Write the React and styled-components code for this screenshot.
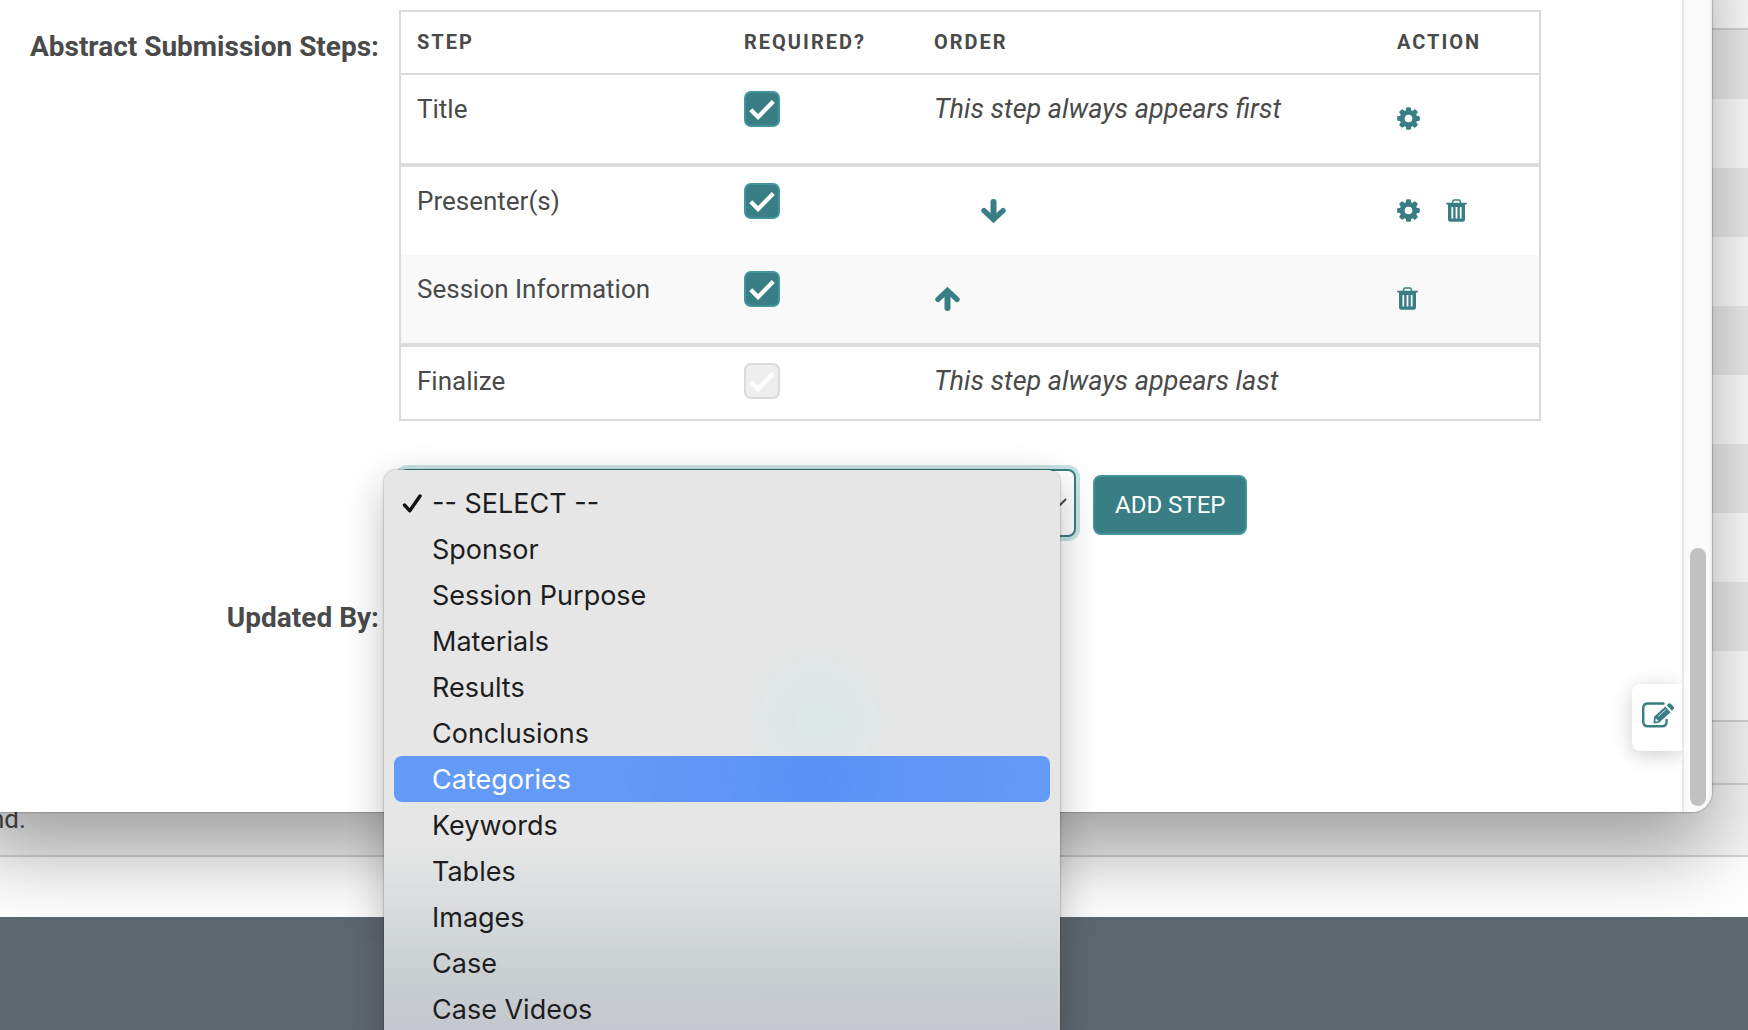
import React from 'react';
import styled, { createGlobalStyle, css } from 'styled-components';

const GlobalStyle = createGlobalStyle`
  * {
    box-sizing: border-box;
  }

  body {
    margin: 0;
    font-family: Roboto, 'Liberation Sans', sans-serif;
    color: #4a4a4a;
  }
`;

const steps = [
  { name: 'Title', required: true, note: 'This step always appears first', settings: true, groupEnd: true },
  { name: 'Presenter(s)', required: true, move: 'down', settings: true, removable: true },
  { name: 'Session Information', required: true, move: 'up', removable: true, striped: true, groupEnd: true },
  { name: 'Finalize', locked: true, note: 'This step always appears last' },
];

const options = [
  '-- SELECT --',
  'Sponsor',
  'Session Purpose',
  'Materials',
  'Results',
  'Conclusions',
  'Categories',
  'Keywords',
  'Tables',
  'Images',
  'Case',
  'Case Videos',
];

const GearIcon = () => (
  <svg width="23" height="23" viewBox="0 0 24 24" fill="none" aria-hidden="true">
    <circle cx="12" cy="12" r="6.6" stroke="currentColor" strokeWidth="5.2" />
    {[0, 45, 90, 135, 180, 225, 270, 315].map((angle) => (
      <rect
        key={angle}
        x="9.4"
        y="0.2"
        width="5.2"
        height="5"
        rx="1.4"
        fill="currentColor"
        transform={`rotate(${angle} 12 12)`}
      />
    ))}
  </svg>
);

const TrashIcon = () => (
  <svg width="21" height="23" viewBox="0 0 21 23" fill="none" aria-hidden="true">
    <path d="M6.2 4.5 7 1.8Q7.300.9 8.200.9h4.600q.9 0 1.200.9l.8 2.700" stroke="currentColor" strokeWidth="1.500" />
    <path d="M.8 4.600h19.400" stroke="currentColor" strokeWidth="1.600" strokeLinecap="round" />
    <path
      fillRule="evenodd"
      fill="currentColor"
      d="M2 5h17v15.500q0 2.300-2.300 2.300H4.300Q2 22.800 2 20.500zM5.400 8v11.500h1.800V8zM9.600 8v11.500h1.800V8zM13.800 8v11.500h1.800V8z"
    />
  </svg>
);

const ArrowIcon = ({ up }) => (
  <svg width="26" height="24" viewBox="-1 0 26 24" fill="none" aria-hidden="true">
    <g transform={up ? undefined : 'rotate(180 12.5 12)'}>
      <path d="M12.500 21V5" stroke="currentColor" strokeWidth="6" strokeLinecap="round" />
      <path d="M3 12.400 12.500 3.500 22 12.400" stroke="currentColor" strokeWidth="5.400" strokeLinecap="round" />
    </g>
  </svg>
);

const ComposeIcon = () => (
  <svg width="33" height="26" viewBox="0 0 33 26" fill="none" aria-hidden="true">
    <path
      d="M22.500 1.500H6Q1.200 1.500 1.200 6.200V19.500Q1.200 24.300 6 24.300H20Q24.600 24.300 24.600 19.500V17"
      stroke="currentColor"
      strokeWidth="2.400"
    />
    <path d="M12 14.800 23.300 4.600 28.600 10.200 17 20.800 11.500 21.400z" fill="currentColor" />
    <path d="M24.700 3.300 26.600 1.600Q27.700.700 28.800 1.700L31.600 4.700Q32.600 5.900 31.600 7L29.900 8.700z" fill="currentColor" />
    <path d="M16.200 14.300 23.800 7.500" stroke="#fff" strokeWidth="0.800" />
    <path d="M13.700 16.300 16.700 19.200 13.400 19.600z" fill="#fff" />
  </svg>
);

const CheckIcon = styled.svg`
  position: absolute;
  inset: 0;
  pointer-events: none;
`;

function StepCheckbox({ name, checked, disabled }) {
  return (
    <CheckLabel>
      <CheckInput type="checkbox" aria-label={`${name} required`} defaultChecked={checked || disabled} disabled={disabled} />
      <CheckIcon width="36" height="36" viewBox="0 0 36 36" fill="none" aria-hidden="true">
        <path d="M6.800 18.800 14 26 29.300 10.500" stroke="#fff" strokeWidth="4.200" />
      </CheckIcon>
    </CheckLabel>
  );
}

function StepRow({ step }) {
  return (
    <Row $striped={step.striped} $groupEnd={step.groupEnd}>
      <td>{step.name}</td>
      <td>
        <StepCheckbox name={step.name} checked={step.required} disabled={step.locked} />
      </td>
      <td>
        {step.note && <Note>{step.note}</Note>}
        {step.move && (
          <OrderControls $end={step.move === 'down'}>
            <IconButton type="button" aria-label={`Move ${step.name} ${step.move}`}>
              <ArrowIcon up={step.move === 'up'} />
            </IconButton>
          </OrderControls>
        )}
      </td>
      <td>
        <Actions>
          {step.settings && (
            <IconButton type="button" aria-label={`${step.name} settings`}>
              <GearIcon />
            </IconButton>
          )}
          {step.removable && (
            <IconButton type="button" aria-label={`Remove ${step.name}`}>
              <TrashIcon />
            </IconButton>
          )}
        </Actions>
      </td>
    </Row>
  );
}

function StepPicker() {
  return (
    <Picker>
      <PickerField>
        <PickerSelect aria-label="Step to add">
          {options.map((option) => (
            <option key={option}>{option}</option>
          ))}
        </PickerSelect>
        <Chevron width="24" height="14" viewBox="0 0 24 14" fill="none" aria-hidden="true">
          <path d="M1 1 12 12 23 1" stroke="#4a4a4a" strokeWidth="2" />
        </Chevron>
        <Menu role="listbox" aria-label="Steps">
          {options.map((option, index) => (
            <MenuItem key={option} role="option" aria-selected={index === 0} $active={option === 'Categories'}>
              <Tick>
                {index === 0 && (
                  <svg width="20" height="20" viewBox="0 0 20 20" fill="none" aria-hidden="true">
                    <path d="M2.500 12 7.800 17.800 18 3" stroke="#111" strokeWidth="3.400" strokeLinecap="round" strokeLinejoin="round" />
                  </svg>
                )}
              </Tick>
              {option}
            </MenuItem>
          ))}
        </Menu>
      </PickerField>
      <AddButton type="button">ADD STEP</AddButton>
    </Picker>
  );
}

export default function App() {
  return (
    <Page>
      <GlobalStyle />
      <ListHead />
      {[...Array(10)].map((_, i) => (
        <ListRow key={i} $dark={i % 2 === 0} />
      ))}
      <ListFoot />
      <ListNote>nd.</ListNote>
      <Blank />
      <Footer />

      <Modal>
        <ModalBody>
          <FieldName>Abstract Submission Steps:</FieldName>
          <div>
            <StepTable>
              <colgroup>
                <col className="step" />
                <col className="required" />
                <col />
                <col className="action" />
              </colgroup>
              <thead>
                <tr>
                  <th>STEP</th>
                  <th>REQUIRED?</th>
                  <th>ORDER</th>
                  <th>ACTION</th>
                </tr>
              </thead>
              <tbody>
                {steps.map((step) => (
                  <StepRow key={step.name} step={step} />
                ))}
              </tbody>
            </StepTable>
            <StepPicker />
          </div>
          <FieldName>Updated By:</FieldName>
        </ModalBody>
        <EditTab type="button" aria-label="Edit">
          <ComposeIcon />
        </EditTab>
        <ScrollTrack>
          <ScrollThumb />
        </ScrollTrack>
      </Modal>
    </Page>
  );
}

const Page = styled.div`
  position: relative;
  display: flex;
  flex-direction: column;
  height: 100vh;
  min-height: 1030px;
  overflow: hidden;
  background: #fff;
`;

const ListHead = styled.div`
  flex: none;
  height: 30px;
  border-bottom: 2px solid #d4d4d4;
`;

const ListRow = styled.div`
  flex: none;
  height: 69px;
  background: ${({ $dark }) => ($dark ? '#ededed' : '#fff')};
`;

const ListFoot = styled.div`
  flex: none;
  height: 65px;
  border: solid #d4d4d4;
  border-width: 2px 0;
  background: #f6f6f6;
`;

const ListNote = styled.div`
  flex: none;
  height: 72px;
  border-bottom: 2px solid #d4d4d4;
  background: #f6f6f6;
  font-size: 26px;
  line-height: 68px;
  text-indent: -10px;
`;

const Blank = styled.div`
  flex: none;
  height: 60px;
`;

const Footer = styled.footer`
  flex: 1;
  background: #5e6871;
`;

const Modal = styled.section`
  position: absolute;
  top: -100px;
  left: -30px;
  right: 36px;
  display: flex;
  border-radius: 20px;
  background: #fff;
  box-shadow: 0 40px 80px rgba(0, 0, 0, 0.35), 0 0 2px rgba(0, 0, 0, 0.6);
`;

const ModalBody = styled.div`
  flex: 1;
  display: grid;
  grid-template-columns: 409px 1fr;
  column-gap: 20px;
  row-gap: 62px;
  padding: 110px 141px 175px 0;
`;

const FieldName = styled.div`
  font-size: 28px;
  font-weight: 700;
  line-height: 38px;
  text-align: right;

  &:first-child {
    padding-top: 18px;
  }
`;

const StepTable = styled.table`
  width: 100%;
  table-layout: fixed;
  border: 2px solid #dadada;
  border-spacing: 0;
  font-size: 26px;

  .step {
    width: 327px;
  }

  .required {
    width: 190px;
  }

  .action {
    width: 158px;
  }

  th {
    height: 63px;
    padding: 0 16px 2px;
    border-bottom: 2px solid #dadada;
    font-size: 20px;
    font-weight: 700;
    letter-spacing: 2px;
    text-align: left;
  }

  td {
    padding: 16px;
    line-height: 36px;
    vertical-align: top;
    white-space: nowrap;
  }
`;

const Row = styled.tr`
  background: ${({ $striped }) => ($striped ? '#f9f9f9' : '#fff')};

  ${({ $groupEnd }) =>
    $groupEnd &&
    css`
      td {
        border-bottom: 4px solid #dcdcdc;
      }
    `}
`;

const CheckLabel = styled.label`
  position: relative;
  display: block;
  width: 36px;
  height: 40px;
`;

const CheckInput = styled.input`
  appearance: none;
  display: block;
  width: 36px;
  height: 36px;
  margin: 0;
  border: 2px solid #43949b;
  border-radius: 7px;
  background: #387e84;

  &:disabled {
    border-color: #dadada;
    background: #eee;
  }
`;

const Note = styled.em`
  display: block;
  font-size: 27px;
  font-style: italic;
`;

const OrderControls = styled.div`
  display: flex;
  padding-left: ${({ $end }) => ($end ? '46px' : '0')};
`;

const Actions = styled.div`
  display: flex;
  gap: 26px;
`;

const IconButton = styled.button`
  display: flex;
  align-items: flex-start;
  height: 56px;
  padding: 16px 0;
  border: 0;
  background: none;
  color: #387e84;
`;

const Picker = styled.div`
  display: flex;
  align-items: flex-start;
  gap: 17px;
  margin-top: 48px;
`;

const PickerField = styled.div`
  position: relative;
  width: 677px;
`;

const PickerSelect = styled.select`
  appearance: none;
  display: block;
  width: 100%;
  height: 68px;
  padding: 0 16px;
  border: 2px solid #387e84;
  border-radius: 8px;
  background: #fff;
  box-shadow: 0 0 0 4px #c8e3e5;
  color: #4a4a4a;
  font: 26px Roboto, sans-serif;
`;

const Chevron = styled.svg`
  position: absolute;
  top: 29px;
  right: 9px;
  pointer-events: none;
`;

const Menu = styled.ul`
  position: absolute;
  top: 1px;
  left: -15px;
  z-index: 2;
  width: 676px;
  margin: 0;
  padding: 10px;
  border-radius: 12px;
  background:
    radial-gradient(circle at 433px 250px, #dae8e8, rgba(230, 230, 230, 0) 78px),
    linear-gradient(#e6e6e6 370px, #d8dcdd 436px, #c9ced1 506px, #c4c8ce 561px);
  box-shadow: 0 14px 40px rgba(0, 0, 0, 0.25), 0 0 2px rgba(0, 0, 0, 0.5);
  list-style: none;
`;

const MenuItem = styled.li`
  display: flex;
  align-items: center;
  height: 46px;
  border-radius: 8px;
  color: ${({ $active }) => ($active ? '#fff' : '#1d1d1f')};
  background: ${({ $active }) =>
    $active ? 'radial-gradient(circle at 423px 20px, #5a91f7, #6399f7 200px, #659bf8)' : 'none'};
  font-family: Inter, 'Liberation Sans', sans-serif;
  font-size: 27px;
`;

const Tick = styled.span`
  display: flex;
  width: 38px;
  padding-left: 8px;
`;

const AddButton = styled.button`
  height: 60px;
  margin-top: 6px;
  padding: 0 20px;
  border: 2px solid #43949b;
  border-radius: 8px;
  background: #387e84;
  color: #fff;
  font: 24px Roboto, sans-serif;
`;

const EditTab = styled.button`
  position: absolute;
  right: 30px;
  bottom: 61px;
  display: flex;
  align-items: center;
  width: 50px;
  height: 67px;
  padding: 0 0 5px 10px;
  border: 0;
  border-radius: 8px 0 0 8px;
  background: #fff;
  box-shadow: 0 4px 20px rgba(0, 0, 0, 0.2);
  color: #387e84;
`;

const ScrollTrack = styled.div`
  position: relative;
  display: flex;
  flex-direction: column;
  justify-content: flex-end;
  width: 30px;
  padding: 6px;
  border: solid #e8e8e8;
  border-width: 0 2px;
  border-right-color: #f0f0f0;
  border-radius: 0 20px 20px 0;
  background: #fafafa;
`;

const ScrollThumb = styled.div`
  width: 16px;
  height: 258px;
  border-radius: 8px;
  background: #c1c1c1;
`;
